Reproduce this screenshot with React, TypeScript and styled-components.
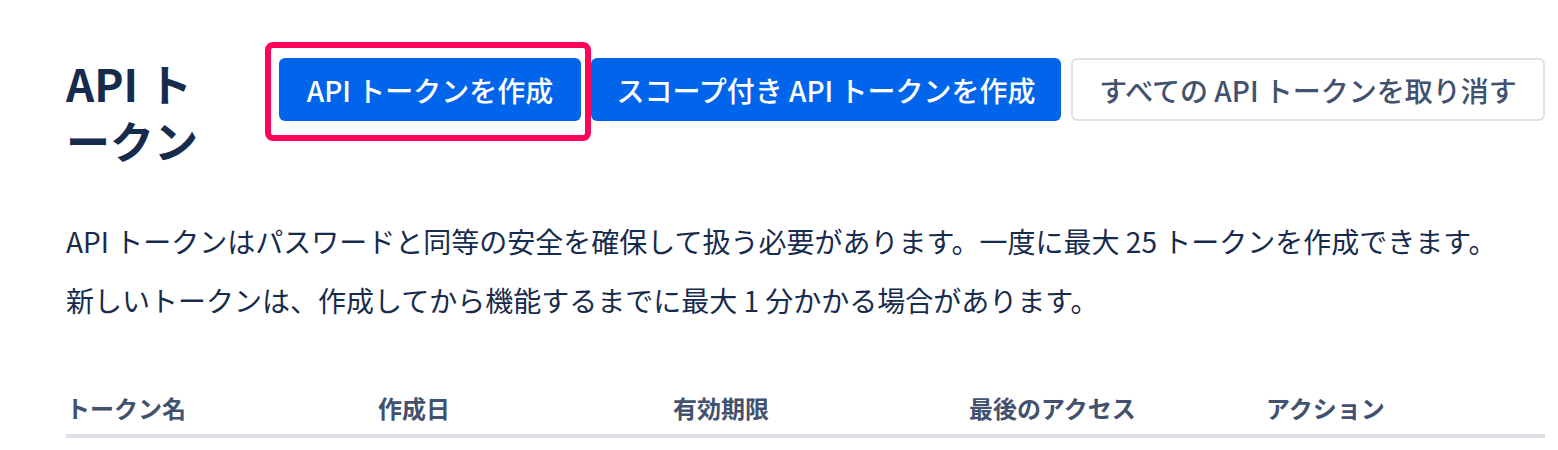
import React from "react";
import styled, { createGlobalStyle } from "styled-components";

const Global = createGlobalStyle`
  html, body { margin: 0; padding: 0; background: #ffffff; }
  body { font-family: "Noto Sans CJK JP", "Noto Sans", sans-serif; color: #172B4D; }
  * { box-sizing: border-box; }
`;

const Page = styled.div`
  padding: 55px 13px 0 66px;
  width: 1558px;
`;

const Header = styled.div`
  display: flex;
  align-items: flex-start;
`;

const Title = styled.h1`
  margin: 0;
  flex: 0 0 150px;
  margin-right: 63px;
  font-size: 44px;
  line-height: 57px;
  font-weight: 700;
  color: #172B4D;
`;

const Actions = styled.div`
  position: relative;
  display: flex;
  gap: 10px;
  margin-top: 3px;
`;

const Highlight = styled.div`
  position: absolute;
  left: -14px;
  top: -16px;
  width: 326px;
  height: 99px;
  border: 6px solid #ff0558;
  border-radius: 8px;
  pointer-events: none;
`;

const Button = styled.button<{ $variant?: "primary" | "default"; $w: number }>`
  width: ${(p) => p.$w}px;
  height: 63px;
  padding: 0;
  border-radius: 6px;
  font-family: inherit;
  font-size: 28px;
  font-weight: 500;
  cursor: pointer;
  white-space: nowrap;
  background: ${(p) => (p.$variant === "default" ? "#ffffff" : "#0065EB")};
  color: ${(p) => (p.$variant === "default" ? "#42526E" : "#ffffff")};
  border: ${(p) => (p.$variant === "default" ? "2px solid #DFE1E6" : "none")};
`;

const Text = styled.p`
  margin: 0;
  font-size: 28px;
  line-height: 40px;
  color: #172B4D;
  & + & { margin-top: 19px; }
`;

const Intro = styled.div`
  margin-top: 52px;
`;

const Table = styled.div`
  margin-top: 73px;
  width: 1479px;
`;

const HeadRow = styled.div`
  display: grid;
  grid-template-columns: 312px 295px 296px 297px 1fr;
  padding-bottom: 11px;
  border-bottom: 4px solid #DFE1E6;
`;

const Th = styled.div`
  font-size: 24px;
  line-height: 30px;
  font-weight: 700;
  color: #42526E;
`;

export default function App() {
  return (
    <>
      <Global />
      <Page>
        <Header>
          <Title>API トークン</Title>
          <Actions>
            <Button $w={302}>API トークンを作成</Button>
            <Button $w={470}>スコープ付き API トークンを作成</Button>
            <Button $w={474} $variant="default">すべての API トークンを取り消す</Button>
            <Highlight />
          </Actions>
        </Header>
        <Intro>
          <Text>API トークンはパスワードと同等の安全を確保して扱う必要があります。一度に最大 25 トークンを作成できます。</Text>
          <Text>新しいトークンは、作成してから機能するまでに最大 1 分かかる場合があります。</Text>
        </Intro>
        <Table>
          <HeadRow>
            <Th>トークン名</Th>
            <Th>作成日</Th>
            <Th>有効期限</Th>
            <Th>最後のアクセス</Th>
            <Th>アクション</Th>
          </HeadRow>
        </Table>
      </Page>
    </>
  );
}
